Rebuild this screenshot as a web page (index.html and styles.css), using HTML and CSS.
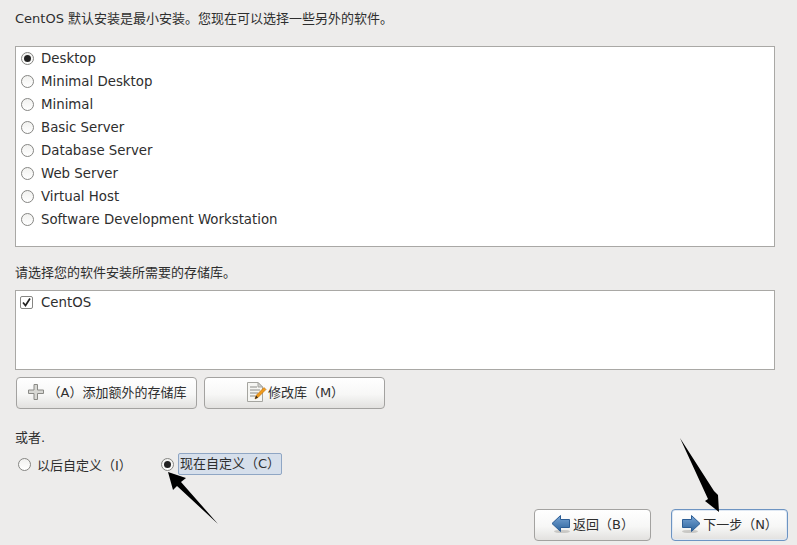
FILE: index.html
```html
<!DOCTYPE html>
<html lang="zh-CN">
<head>
    <meta charset="UTF-8">
    <title>CentOS 软件选择</title>
    <link rel="stylesheet" href="styles.css">
</head>
<body>
    <div class="page">
        <p class="intro">CentOS 默认安装是最小安装。您现在可以选择一些另外的软件。</p>

        <div class="list-box task-box">
            <div class="row"><span class="radio checked"></span>Desktop</div>
            <div class="row"><span class="radio"></span>Minimal Desktop</div>
            <div class="row"><span class="radio"></span>Minimal</div>
            <div class="row"><span class="radio"></span>Basic Server</div>
            <div class="row"><span class="radio"></span>Database Server</div>
            <div class="row"><span class="radio"></span>Web Server</div>
            <div class="row"><span class="radio"></span>Virtual Host</div>
            <div class="row"><span class="radio"></span>Software Development Workstation</div>
        </div>

        <p class="repo-label">请选择您的软件安装所需要的存储库。</p>

        <div class="list-box repo-box">
            <div class="row">
                <span class="check">
                    <svg width="11" height="11" viewBox="0 0 11 11"><path d="M2 5.5 L4.5 8.5 L9 1.5" fill="none" stroke="#222" stroke-width="1.7"/></svg>
                </span>CentOS
            </div>
        </div>

        <div class="repo-actions">
            <button class="btn add-btn">
                <svg class="icon" width="18" height="18" viewBox="0 0 18 18"><path d="M7 1.5 H10.5 V7 H16.5 V10.5 H10.5 V16.5 H7 V10.5 H1.5 V7 H7 Z" fill="#d8d8d4" stroke="#8a8a86"/></svg>
                <span>（A）添加额外的存储库</span>
            </button>
            <button class="btn edit-btn">
                <svg class="icon" width="22" height="22" viewBox="0 0 22 22">
                    <path d="M2.5 1.5 H13 L17.5 6 V20.5 H2.5 Z" fill="#f6f6f3" stroke="#a5a5a0"/>
                    <path d="M13 1.5 V6 H17.5 Z" fill="#d4d4d0" stroke="#a5a5a0"/>
                    <path d="M5 6 H12 M5 9 H15 M5 12 H13 M5 15 H10" stroke="#8c8c88"/>
                    <path d="M10 18 L11 14.5 L19 6.5 L21 8.5 L13 16.5 Z" fill="#f09a1a" stroke="#b86a08" stroke-width=".6"/>
                    <path d="M10 18 L11 14.5 L13 16.5 Z" fill="#332a20"/>
                </svg>
                <span>修改库（M）</span>
            </button>
        </div>

        <p class="or-label">或者.</p>

        <div class="custom-row">
            <label class="custom-opt first"><span class="radio large"></span>以后自定义（I）</label>
            <label class="custom-opt"><span class="radio large checked"></span><span class="focused">现在自定义（C）</span></label>
        </div>

        <div class="nav-row">
            <button class="btn nav-btn">
                <svg class="icon" width="20" height="20" viewBox="0 0 20 20">
                    <defs>
                        <linearGradient id="arrow-blue" x1="0" y1="0" x2="0" y2="1">
                            <stop offset="0" stop-color="#7aa6d6"/>
                            <stop offset="1" stop-color="#2c639c"/>
                        </linearGradient>
                    </defs>
                    <ellipse cx="11" cy="17.5" rx="8" ry="1.6" fill="#c9c8c5"/>
                    <path d="M1 9.5 L9.5 1.5 V5.5 H18.5 V13.5 H9.5 V17.5 Z" fill="url(#arrow-blue)" stroke="#2b5c94"/>
                </svg>
                <span>返回（B）</span>
            </button>
            <button class="btn nav-btn focus">
                <svg class="icon" width="20" height="20" viewBox="0 0 20 20">
                    <ellipse cx="9" cy="17.5" rx="8" ry="1.6" fill="#c9c8c5"/>
                    <path d="M19 9.5 L10.5 1.5 V5.5 H1.5 V13.5 H10.5 V17.5 Z" fill="url(#arrow-blue)" stroke="#2b5c94"/>
                </svg>
                <span>下一步（N）</span>
            </button>
        </div>
    </div>

    <!-- annotation arrows drawn over the screenshot -->
    <svg class="arrows" width="797" height="545" viewBox="0 0 797 545">
        <path d="M168 472 L186 478 L181 482 L218 524 L177 486 L173 490 Z" fill="#000"/>
        <path d="M680 438 L714 491 L718 495 L719 512 L705 501 L708 499 Z" fill="#000"/>
    </svg>
</body>
</html>
```

FILE: styles.css
```css
* {
    box-sizing: border-box;
}
body {
    margin: 0;
    width: 797px;
    height: 545px;
    overflow: hidden;
    background-color: #edeceb;
    color: #2e2e2e;
    font-family: "DejaVu Sans", "Noto Sans CJK SC", sans-serif;
    font-size: 13.33px;
}
p {
    margin: 0;
}
.page {
    display: flex;
    flex-direction: column;
    height: 545px;
    padding: 10px 9px 4px 15px;
}
.intro {
    height: 17px;
    line-height: 17px;
    font-size: 13px;
}
.list-box {
    width: 760px;
    background-color: #fff;
    border: 1px solid #a9a8a5;
}
.task-box {
    height: 202px;
    margin-top: 19px;
}
.repo-box {
    height: 80px;
    margin-top: 9px;
}
.repo-label {
    height: 17px;
    line-height: 17px;
    margin-top: 17px;
    font-size: 13px;
}
.row {
    display: flex;
    align-items: center;
    height: 23px;
    padding-left: 5px;
}
.radio {
    width: 13px;
    height: 13px;
    margin-right: 7px;
    flex: none;
    position: relative;
    border: 1px solid #868683;
    border-radius: 50%;
    background: linear-gradient(#f1f1ef, #ffffff);
}
.radio.checked::after {
    content: "";
    position: absolute;
    left: 2px;
    top: 2px;
    width: 7px;
    height: 7px;
    border-radius: 50%;
    background-color: #222;
}
.radio.large {
    margin-right: 6px;
}
.check {
    display: flex;
    align-items: center;
    justify-content: center;
    width: 13px;
    height: 13px;
    margin-left: -1px;
    margin-right: 8px;
    border: 1px solid #868683;
    border-radius: 2px;
    background-color: #fff;
}
.btn {
    display: flex;
    align-items: center;
    justify-content: center;
    height: 32px;
    padding: 0 0 3px;
    color: #2e2e2e;
    font-family: inherit;
    font-size: 13px;
    border: 1px solid #a3a2a0;
    border-radius: 4px;
    background: linear-gradient(#ffffff 0%, #f7f7f6 55%, #e2e1df 100%);
}
.repo-actions {
    display: flex;
    gap: 7px;
    margin-top: 7px;
    padding-left: 1px;
}
.add-btn {
    width: 181px;
    gap: 3px;
}
.edit-btn {
    width: 181px;
    gap: 1px;
}
.or-label {
    height: 17px;
    line-height: 17px;
    margin-top: 20px;
    font-size: 13px;
}
.custom-row {
    display: flex;
    align-items: center;
    height: 22px;
    margin-top: 7px;
    font-size: 13px;
}
.custom-opt {
    display: flex;
    align-items: center;
}
.custom-opt.first {
    width: 146px;
    padding-left: 3px;
}
.focused {
    margin-left: -2px;
    padding: 0 1px;
    height: 22px;
    line-height: 20px;
    width: 104px;
    white-space: nowrap;
    background-color: #d6dfeb;
    border: 1px solid #8fa6c4;
    border-radius: 2px;
}
.nav-row {
    display: flex;
    justify-content: flex-end;
    gap: 20px;
    margin-top: 34px;
}
.nav-btn {
    width: 117px;
    gap: 2px;
}
.nav-btn.focus {
    border-color: #6d94c2;
    box-shadow: inset 0 0 0 1px #dfe8f3;
}
.arrows {
    position: absolute;
    left: 0;
    top: 0;
    pointer-events: none;
}
```
